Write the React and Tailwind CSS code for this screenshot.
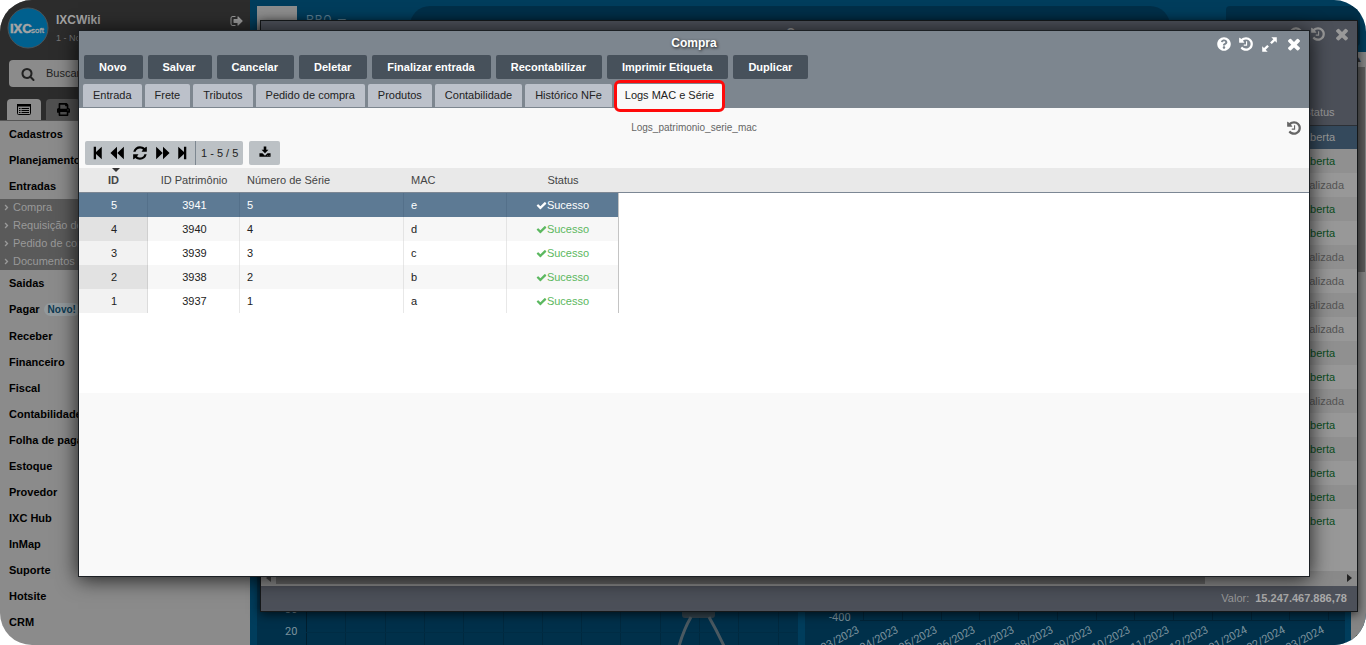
import { FaAngleRight, FaPrint, FaQuestionCircle } from "react-icons/fa";

const paths = {
	check:
		"M1671 566q0 40-28 68l-724 724-136 136q-28 28-68 28t-68-28l-136-136-362-362q-28-28-28-68t28-68l136-136q28-28 68-28t68 28l294 295 656-657q28-28 68-28t68 28l136 136q28 28 28 68z",
	times:
		"M1490 1322q0 40-28 68l-136 136q-28 28-68 28t-68-28l-294-294-294 294q-28 28-68 28t-68-28l-136-136q-28-28-28-68t28-68l294-294-294-294q-28-28-28-68t28-68l136-136q28-28 68-28t68 28l294 294 294-294q28-28 68-28t68 28l136 136q28 28 28 68t-28 68l-294 294 294 294q28 28 28 68z",
	history:
		"M1664 896q0 156-61 298t-164 245-245 164-298 61q-172 0-327-72.5t-264-204.5q-7-10-6.5-22.5t8.5-20.5l137-138q10-9 25-9 16 2 23 12 73 95 179 147t225 52q104 0 198.5-40.5t163.5-109.5 109.5-163.5 40.5-198.5-40.5-198.5-109.5-163.5-163.5-109.5-198.5-40.5q-98 0-188 35.5t-160 101.5l137 138q31 30 14 69-17 40-59 40h-448q-26 0-45-19t-19-45v-448q0-42 40-59 39-17 69 14l130 129q107-101 244.5-156.5t284.5-55.5q156 0 298 61t245 164 164 245 61 298zm-640-288v448q0 14-9 23t-23 9h-320q-14 0-23-9t-9-23v-64q0-14 9-23t23-9h224v-352q0-14 9-23t23-9h64q14 0 23 9t9 23z",
	signOut:
		"M704 1440q0 4 1 20t.5 26.5-3 23.5-10 19.5-20.5 6.5h-320q-119 0-203.5-84.5t-84.5-203.5v-704q0-119 84.5-203.5t203.5-84.5h320q13 0 22.5 9.5t9.5 22.5q0 4 1 20t.5 26.5-3 23.5-10 19.5-20.5 6.5h-320q-66 0-113 47t-47 113v704q0 66 47 113t113 47h312l11.5 1 11.5 3 8 5.5 7 9 2 13.5zm928-544q0 26-19 45l-544 544q-19 19-45 19t-45-19-19-45v-288h-448q-26 0-45-19t-19-45v-384q0-26 19-45t45-19h448v-288q0-26 19-45t45-19 45 19l544 544q19 19 19 45z",
	refresh:
		"M1639 1056q0 5-1 7-64 268-268 434.5t-478 166.5q-146 0-282.5-55t-243.5-157l-129 129q-19 19-45 19t-45-19-19-45v-448q0-26 19-45t45-19h448q26 0 45 19t19 45-19 45l-137 137q71 66 161 102t187 36q134 0 250-65t186-179q11-17 53-117 8-23 30-23h192q13 0 22.5 9.5t9.5 22.5zm25-800v448q0 26-19 45t-45 19h-448q-26 0-45-19t-19-45 19-45l138-138q-148-137-349-137-134 0-250 65t-186 179q-11 17-53 117-8 23-30 23h-199q-13 0-22.5-9.5t-9.5-22.5v-7q65-268 270-434.5t480-166.5q146 0 284 55.5t245 156.5l130-129q19-19 45-19t45 19 19 45z",
	first: "M416 192h260v600l640-600v1408l-640-600v600H416z",
	last: "M1376 192h-260v600L476 192v1408l640-600v600h260z",
	backward: "M896 192v1408L160 896zM1664 192v1408L928 896z",
	forward: "M896 192v1408l736-704zM128 192v1408l736-704z",
	download:
		"M704 64h384v512h320l-512 512-512-512h320zM64 1088h448l384 352 384-352h448v512H64zm1184 288v96h96v-96zm224 0v96h96v-96z",
	expand:
		"M1088 128h576v576l-190-190-340 340-176-176 340-340zM704 1664H128v-576l190 190 340-340 176 176-340 340z",
	search:
		"M1216 832q0-185-131.5-316.5t-316.500-131.500-316.500 131.500-131.500 316.500 131.500 316.500 316.500 131.500 316.500-131.500 131.500-316.500zm512 832q0 52-38 90t-90 38q-54 0-90-38l-343-342q-179 124-399 124-143 0-273.500-55.500t-225-150-150-225-55.500-273.500 55.500-273.500 150-225 225-150 273.500-55.500 273.500 55.500 225 150 150 225 55.500 273.500q0 220-124 399l343 343q37 37 37 90z",
};

const Icon = ({ name, className }) => (
	<svg
		viewBox="0 0 1792 1792"
		fill="currentColor"
		aria-hidden="true"
		className={className}>
		<path d={paths[name]} />
	</svg>
);

const menuTop = ["Cadastros", "Planejamento", "Entradas"];
const submenu = [
	"Compra",
	"Requisição de compra",
	"Pedido de compra",
	"Documentos",
];
const menuBottom = [
	"Receber",
	"Financeiro",
	"Fiscal",
	"Contabilidade",
	"Folha de pagamento",
	"Estoque",
	"Provedor",
	"IXC Hub",
	"InMap",
	"Suporte",
	"Hotsite",
	"CRM",
];

const actions = [
	"Novo",
	"Salvar",
	"Cancelar",
	"Deletar",
	"Finalizar entrada",
	"Recontabilizar",
	"Imprimir Etiqueta",
	"Duplicar",
];
const tabs = [
	"Entrada",
	"Frete",
	"Tributos",
	"Pedido de compra",
	"Produtos",
	"Contabilidade",
	"Histórico NFe",
];

const logs = [
	{ id: 5, patrimonio: 3941, serie: 5, mac: "e" },
	{ id: 4, patrimonio: 3940, serie: 4, mac: "d" },
	{ id: 3, patrimonio: 3939, serie: 3, mac: "c" },
	{ id: 2, patrimonio: 3938, serie: 2, mac: "b" },
	{ id: 1, patrimonio: 3937, serie: 1, mac: "a" },
];

// A = Aberta, F = Finalizada
const purchases = "AAFAAFFFFAAFAAAAA".split("");

const months = [
	"03/2023",
	"04/2023",
	"05/2023",
	"06/2023",
	"07/2023",
	"08/2023",
	"09/2023",
	"10/2023",
	"11/2023",
	"12/2023",
	"01/2024",
	"02/2024",
	"03/2024",
];

const MenuItem = ({ children }) => (
	<li>
		<a
			href="#"
			className="flex min-h-[26px] items-center pl-[9px] font-bold whitespace-nowrap text-black">
			{children}
		</a>
	</li>
);

const Sidebar = () => (
	<aside className="w-[250px] shrink-0 overflow-hidden bg-[#8b8b8b]">
		<div className="flex h-[121px] flex-col border-b border-[#555] bg-[#2c2c2c]">
			<div className="flex h-[60px] pt-[7px] pl-[7px]">
				<svg viewBox="0 0 42 42" className="size-[42px] shrink-0">
					<circle cx="21" cy="21" r="20" fill="#00608e" stroke="#4a5257" />
					<text
						x="3"
						y="26"
						fontSize="13"
						fontWeight="bold"
						fontFamily="Liberation Sans, sans-serif"
						stroke="#a5a5a5"
						strokeWidth="0.5"
						fill="#a5a5a5">
						IXC
					</text>
					<text
						x="24"
						y="26"
						fontSize="8"
						fontFamily="Liberation Sans, sans-serif"
						stroke="#a5a5a5"
						strokeWidth="0.3"
						fill="#a5a5a5">
						soft
					</text>
				</svg>
				<div className="flex-1 pl-[7px]">
					<p className="mt-[5px] text-xs leading-4 font-bold text-[#a3a3a3]">
						IXCWiki
					</p>
					<p className="mt-1 text-[9px] leading-3 text-[#777]">
						1 - Novo usuário
					</p>
				</div>
				<button aria-label="Sair" className="mt-[6px] mr-[6px] h-4 text-[#999]">
					<Icon name="signOut" className="size-[14px]" />
				</button>
			</div>
			<label className="mx-[9px] flex h-[27px] shrink-0 items-center rounded bg-[#8b8b8b] pl-3 text-[#222]">
				<Icon name="search" className="size-[14px] shrink-0" />
				<input
					placeholder="Buscar"
					aria-label="Buscar"
					className="ml-[11px] w-full text-[11px] placeholder:text-[#222]"
				/>
			</label>
			<div className="mt-3 flex flex-1 gap-[5px] pl-[7px]">
				<button
					aria-label="Menu"
					className="flex w-[34px] items-center justify-center rounded-t-sm bg-[#8b8b8b] text-black">
					<svg viewBox="0 0 14 11" className="h-[11px] w-[14px]">
						<rect x="0.500" y="0.500" width="13" height="10" rx="1" fill="none" stroke="currentColor" />
						<path
							d="M0 0h14v2.500H0zM2 4h1.500v1H2zM2 6h1.500v1H2zM2 8h1.500v1H2zM4.500 4H12v1H4.500zM4.500 6H12v1H4.500zM4.500 8H12v1H4.500z"
							fill="currentColor"
						/>
					</svg>
				</button>
				<button
					aria-label="Imprimir"
					className="flex w-[34px] items-center justify-center rounded-t-sm bg-[#505050] text-black">
					<FaPrint className="size-[13px]" />
				</button>
			</div>
		</div>
		<ul className="text-[11px]">
			{menuTop.map((item) => (
				<MenuItem key={item}>{item}</MenuItem>
			))}
			<li>
				<ul className="flex flex-col gap-px bg-[#5a5a5a] text-[#999]">
					{submenu.map((item) => (
						<li key={item}>
							<a
								href="#"
								className="flex h-[17px] items-center gap-[2px] pl-[2px] whitespace-nowrap">
								<FaAngleRight className="size-[9px] shrink-0" />
								{item}
							</a>
						</li>
					))}
				</ul>
			</li>
			<MenuItem>Saidas</MenuItem>
			<MenuItem>
				Pagar
				<span className="my-[7px] ml-1 rounded-lg bg-[#939a9d] px-1 text-[10px] leading-[13px] text-[#0c3a54]">
					Novo!
				</span>
			</MenuItem>
			{menuBottom.map((item) => (
				<MenuItem key={item}>{item}</MenuItem>
			))}
		</ul>
	</aside>
);

const Dashboard = () => (
	<main className="flex min-w-0 flex-1 flex-col bg-[#003d5c]">
		<header className="flex h-[52px] shrink-0 pt-[6px] pr-[6px] pl-[7px]">
			<div className="w-10 bg-[#8d8d8d]" />
			<p className="w-[113px] pt-[5px] pl-[9px] font-[Roboto,sans-serif] text-[12px] tracking-widest whitespace-nowrap text-[#5d7f92]">
				PRO —
			</p>
			<div className="h-10 flex-1 rounded-t-[20px] bg-[#002f48]" />
			<div className="ml-14 h-10 w-[134px] rounded bg-[#002f48]" />
		</header>
		<div className="flex min-h-0 flex-1">
			<div className="flex flex-1 gap-[7px] pr-[6px] pl-[7px]">
				<section className="flex flex-1 items-end overflow-hidden bg-[#00304a]">
					<svg
						width="540"
						height="40"
						fontFamily="Roboto, sans-serif"
						fontSize="11"
						fill="#7c929d">
						{Array.from({ length: 13 }, (_, i) => (
							<path
								key={i}
								d={`M${49.5 + Math.round(i * 39.3)} 0v40`}
								stroke={i ? "#00293f" : "#001f30"}
							/>
						))}
						<path d="M49 27.500h491" stroke="#002c44" />
						<text x="28" y="8">30</text>
						<text x="28" y="30">20</text>
						<rect x="425" y="0" width="33" height="13" rx="3" fill="#33434c" />
						<path
							d="M434 12q-7 12-12 29M452 12q8 14 15 29"
							fill="none"
							stroke="#4a5961"
							strokeWidth="3"
						/>
					</svg>
				</section>
				<section className="flex flex-1 items-end overflow-hidden bg-[#00304a]">
					<svg
						width="540"
						height="40"
						fontFamily="Roboto, sans-serif"
						fontSize="11"
						fill="#7c929d">
						<path d="M55 15.500h486" stroke="#00253a" />
						<text x="24" y="16">-400</text>
						{months.map((month, i) => {
							const x = Math.round(55 + i * 38.75);
							return (
								<g key={month}>
									<path d={`M${x + 3.5} 0v16`} stroke="#00253a" />
									<text
										textAnchor="end"
										transform={`translate(${x} 27) rotate(-28)`}>
										{month}
									</text>
								</g>
							);
						})}
					</svg>
				</section>
			</div>
			<div className="flex w-[15px] flex-col items-center bg-[#858585]">
				<span className="flex h-[15px] items-center text-[8px] text-[#333]">▲</span>
				<div className="h-[205px] w-[13px] bg-[#5c5c5c]" />
				<span className="mt-auto flex h-[15px] items-center text-[8px] text-black">▼</span>
			</div>
		</div>
	</main>
);

const statusClass = (status, i) => {
	if (i === 0) return "bg-[#34495c] text-[#999]";
	const bg = i % 2 ? "bg-[#909090]" : "bg-[#989898]";
	return `${bg} ${status === "A" ? "text-[#0b4d1d]" : "text-[#555]"}`;
};

const PurchaseList = () => (
	<section className="absolute top-5 right-2 bottom-[33px] left-[260px] flex flex-col border border-[#15181a] bg-[#4c5059] text-[11px] text-[#999] shadow-[0_2px_10px_rgba(0,0,0,0.7)]">
		<div className="relative flex h-[79px] shrink-0 justify-center pt-1">
			<h2 className="text-xs font-bold">Compra</h2>
			<div className="absolute top-1 right-[6px] flex items-center gap-[7px] text-[#999]">
				<button aria-label="Ajuda da lista">
					<FaQuestionCircle className="size-[14px]" />
				</button>
				<button aria-label="Histórico da lista">
					<Icon name="history" className="size-4" />
				</button>
				<button aria-label="Fechar lista">
					<Icon name="times" className="size-[18px]" />
				</button>
			</div>
		</div>
		<div className="min-h-0 flex-1 overflow-hidden bg-[#989898]">
			<table className="w-full table-fixed border-collapse">
				<thead>
					<tr className="h-[25px] border-b border-[#2c3036] bg-[#4c5059]">
						<th />
						<th className="w-[76px] font-normal">Status</th>
					</tr>
				</thead>
				<tbody>
					{purchases.map((status, i) => (
						<tr key={i} className={`h-6 text-center ${statusClass(status, i)}`}>
							<td />
							<td>{status === "A" ? "Aberta" : "Finalizada"}</td>
						</tr>
					))}
				</tbody>
			</table>
		</div>
		<div className="flex h-[15px] shrink-0 items-center bg-[#8a8a8a] text-[#444]">
			<svg viewBox="0 0 15 15" className="size-[15px]" fill="currentColor">
				<path d="M10 3v8L5 7z" />
			</svg>
			<div className="mb-[2px] h-[13px] w-[929px] bg-[#666]" />
			<svg viewBox="0 0 15 15" className="ml-auto size-[15px] text-[#222]" fill="currentColor">
				<path d="M5 3v8l5-4z" />
			</svg>
		</div>
		<footer className="flex h-[25px] shrink-0 items-center justify-end gap-[6px] pr-[10px]">
			<span>Valor:</span>
			<b className="text-[#aaa]">15.247.467.886,78</b>
		</footer>
	</section>
);

const Toolbar = () => (
	<div className="flex gap-[6px] px-[6px] text-black">
		<div className="flex h-6 items-center rounded-xs bg-[#bcc1c5]">
			<div className="flex h-6 w-[110px] items-center justify-between px-[5px]">
				<button aria-label="Primeira">
					<Icon name="first" className="size-4" />
				</button>
				<button aria-label="Anterior">
					<Icon name="backward" className="size-4" />
				</button>
				<button aria-label="Atualizar" className="mx-1">
					<Icon name="refresh" className="size-4" />
				</button>
				<button aria-label="Próxima">
					<Icon name="forward" className="size-4" />
				</button>
				<button aria-label="Última">
					<Icon name="last" className="size-4" />
				</button>
			</div>
			<span className="flex h-6 items-center border-l border-[#7d8790] px-[5px] text-[#222]">
				1 - 5 / 5
			</span>
		</div>
		<button
			aria-label="Exportar"
			className="flex h-6 w-[31px] items-center justify-center rounded-xs bg-[#bcc1c5] pb-[2px]">
			<Icon name="download" className="size-3" />
		</button>
	</div>
);

const LogRow = ({ log, index }) => {
	const selected = index === 0;
	const odd = index % 2 === 1;
	let cell = odd ? "bg-[#f7f7f7] border-[#e4e4e4]" : "bg-white border-[#e8e8e8]";
	let idCell = odd
		? "bg-[#e2e2e2] border-[#cfcfcf]"
		: "bg-[#f2f2f2] border-[#dcdcdc]";
	if (selected) {
		cell = "bg-[#5d7a94] border-[#54708a]";
		idCell = cell;
	}
	return (
		<tr className={`h-6 ${selected ? "text-white" : "text-[#222]"}`}>
			<td className={`border-r pl-[2px] text-center ${idCell}`}>{log.id}</td>
			<td className={`border-r pl-[2px] text-center ${cell}`}>{log.patrimonio}</td>
			<td className={`border-r pl-[7px] ${cell}`}>{log.serie}</td>
			<td className={`border-r pl-[7px] ${cell}`}>{log.mac}</td>
			<td className={`border-r ${cell} border-r-[#c4c4c4]`}>
				<span
					className={`flex items-center justify-center ${
						selected ? "text-white" : "text-[#5cb860]"
					}`}>
					<Icon name="check" className="size-[11px]" />
					Sucesso
				</span>
			</td>
			<td />
		</tr>
	);
};

const PurchaseModal = () => (
	<section
		role="dialog"
		aria-label="Compra"
		className="absolute top-[30px] right-14 bottom-[68px] left-[78px] flex flex-col border border-[#1c2024] bg-[#f9f9f9] text-[11px] text-[#222] shadow-[0_2px_20px_rgba(0,0,0,0.8)]">
		<header className="relative bg-[#7d868f]">
			<h1 className="h-6 text-center text-xs leading-6 font-bold text-white text-shadow-[1px_1px_3px_rgba(0,0,0,0.8)]">
				Compra
			</h1>
			<div className="absolute top-1 right-[6px] flex items-center gap-[7px] text-white">
				<button aria-label="Ajuda">
					<FaQuestionCircle className="size-[14px]" />
				</button>
				<button aria-label="Histórico">
					<Icon name="history" className="size-4" />
				</button>
				<button aria-label="Expandir">
					<Icon name="expand" className="size-[17px]" />
				</button>
				<button aria-label="Fechar">
					<Icon name="times" className="size-[18px]" />
				</button>
			</div>
			<div className="flex gap-[5px] px-[5px]">
				{actions.map((action) => (
					<button
						key={action}
						className="h-6 rounded-xs bg-[#47515b] pr-4 pl-[15px] font-bold text-white">
						{action}
					</button>
				))}
			</div>
			<nav className="flex gap-[3px] px-1 pt-[5px]">
				{tabs.map((tab) => (
					<button
						key={tab}
						className="mb-px h-[23px] rounded-t-xs bg-[#bcc1ca] px-[10px]">
						{tab}
					</button>
				))}
				<button className="relative h-6 bg-[#f9f9f9] px-[10px] pb-px">
					Logs MAC e Série
					<span className="absolute -inset-x-px -top-1 -bottom-1 rounded-md border-[3px] border-[#ff0a0a]" />
				</button>
			</nav>
		</header>
		<div className="relative h-[33px] pt-3 text-center text-[10px] leading-4 text-[#666]">
			Logs_patrimonio_serie_mac
			<button aria-label="Histórico de logs" className="absolute top-3 right-[7px]">
				<Icon name="history" className="size-4" />
			</button>
		</div>
		<Toolbar />
		<div className="mt-[3px] h-[225px] bg-white">
			<table className="w-full table-fixed border-separate border-spacing-0">
				<thead>
					<tr className="h-[25px] bg-[#e9e9e9] text-left text-[#444] *:border-b *:border-[#7c8794] *:font-normal">
						<th className="relative w-[69px] text-center">
							<b>ID</b>
							<span className="absolute top-0 left-[33px] border-x-4 border-t-4 border-x-transparent border-t-[#333]" />
						</th>
						<th className="w-[92px] text-center">ID Patrimônio</th>
						<th className="w-[164px] pl-[7px]">Número de Série</th>
						<th className="w-[103px] pl-[7px]">MAC</th>
						<th className="w-[112px] text-center">Status</th>
						<th />
					</tr>
				</thead>
				<tbody>
					{logs.map((log, index) => (
						<LogRow key={log.id} log={log} index={index} />
					))}
				</tbody>
			</table>
		</div>
	</section>
);

const App = () => {
	return (
		<div className="relative flex h-screen overflow-hidden rounded-[32px] font-['Liberation_Sans',Arial,sans-serif]">
			<Sidebar />
			<Dashboard />
			<PurchaseList />
			<PurchaseModal />
		</div>
	);
};

export default App;
